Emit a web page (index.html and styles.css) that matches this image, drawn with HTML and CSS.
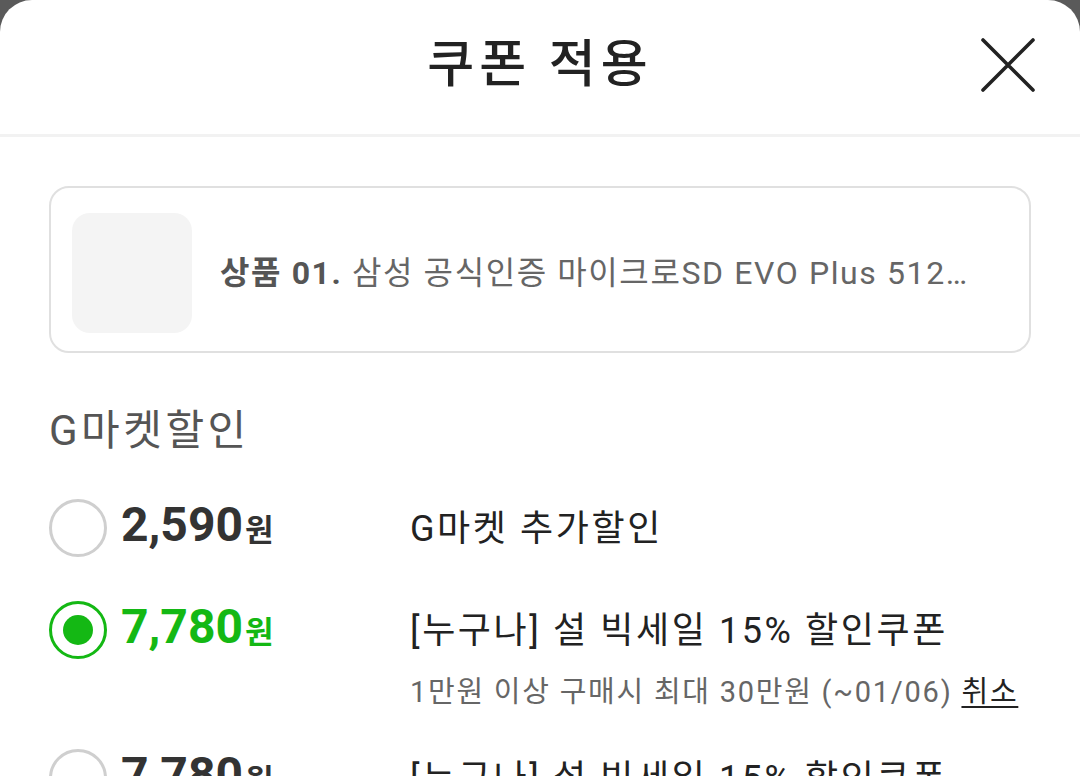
FILE: index.html
```html
<!DOCTYPE html>
<html lang="ko">
<head>
    <meta charset="UTF-8">
    <meta name="viewport" content="width=device-width, initial-scale=1.0">
    <title>쿠폰 적용</title>
    <link rel="stylesheet" href="styles.css">
</head>
<body>

    <div class="sheet">
        <header class="sheet-header">
            <h1>쿠폰 적용</h1>
            <button class="close-btn" type="button" aria-label="닫기">
                <svg width="54" height="54" viewBox="0 0 54 54">
                    <path d="M2 2 L52 52 M52 2 L2 52" stroke="#222" stroke-width="3.6" stroke-linecap="round" fill="none"/>
                </svg>
            </button>
        </header>

        <main class="sheet-body">
            <!-- product summary -->
            <div class="product-card">
                <div class="product-thumb"></div>
                <p class="product-name"><strong>상품 01.</strong> 삼성 공식인증 마이크로SD EVO Plus 512…</p>
            </div>

            <section class="coupon-group">
                <h2>G마켓할인</h2>

                <div class="coupon-row">
                    <div class="coupon-left">
                        <span class="radio"></span>
                        <span class="price">2,590<small>원</small></span>
                    </div>
                    <div class="coupon-info">
                        <p class="coupon-title">G마켓 추가할인</p>
                    </div>
                </div>

                <div class="coupon-row is-selected">
                    <div class="coupon-left">
                        <span class="radio"></span>
                        <span class="price">7,780<small>원</small></span>
                    </div>
                    <div class="coupon-info">
                        <p class="coupon-title">[누구나] 설 빅세일 15% 할인쿠폰</p>
                        <p class="coupon-desc">1만원 이상 구매시 최대 30만원 (~01/06) <a href="#">취소</a></p>
                    </div>
                </div>

                <div class="coupon-row">
                    <div class="coupon-left">
                        <span class="radio"></span>
                        <span class="price">7,780<small>원</small></span>
                    </div>
                    <div class="coupon-info">
                        <p class="coupon-title">[누구나] 설 빅세일 15% 할인쿠폰</p>
                        <p class="coupon-desc">1만원 이상 구매시 최대 30만원 (~01/06)</p>
                    </div>
                </div>
            </section>
        </main>
    </div>

</body>
</html>
```

FILE: styles.css
```css
/* --- base --- */
:root {
    --text-dark: #222;
    --text-mid: #555;
    --text-light: #666;
    --line: #e0e0e0;
    --green: #14b814;
}
* { margin: 0; padding: 0; box-sizing: border-box; }
html, body { height: 100%; }
body { font-family: Roboto, "Noto Sans CJK KR", sans-serif; background: #5a5a5a; color: var(--text-dark); overflow: hidden; }

/* --- bottom sheet --- */
.sheet { background: #fff; border-radius: 32px 32px 0 0; min-height: 100%; }
.sheet-header { position: relative; height: 137px; border-bottom: 3px solid #f2f2f2; display: flex; align-items: center; justify-content: center; padding-bottom: 14px; }
.sheet-header h1 { font-size: 51px; font-weight: 500; color: var(--text-dark); letter-spacing: 5px; }
.close-btn { position: absolute; right: 45px; top: 38px; width: 54px; height: 54px; border: none; background: none; }
.close-btn svg { display: block; }

.sheet-body { padding: 49px 49px 0; }

/* --- product card --- */
.product-card { display: flex; align-items: center; gap: 28px; height: 167px; padding: 0 21px; border: 2px solid var(--line); border-radius: 20px; }
.product-thumb { width: 120px; height: 120px; border-radius: 18px; background: #f4f4f4; flex-shrink: 0; margin-top: 6px; }
.product-name { font-size: 32px; letter-spacing: 1.6px; color: var(--text-light); white-space: nowrap; overflow: hidden; }
.product-name strong { color: var(--text-mid); font-weight: 700; }

/* --- coupons --- */
.coupon-group { margin-top: 53px; }
.coupon-group h2 { font-size: 42px; font-weight: 400; color: var(--text-mid); letter-spacing: 3.5px; line-height: 50px; margin-bottom: 43px; }
.coupon-row { display: grid; grid-template-columns: 361px 1fr; margin-bottom: 43px; }
.coupon-left { display: flex; align-items: center; gap: 14px; height: 58px; }
.radio { width: 58px; height: 58px; border-radius: 50%; border: 3px solid #cfcfcf; flex-shrink: 0; position: relative; }
.price { font-size: 48px; font-weight: 700; color: #333; letter-spacing: 0; line-height: 58px; }
.price small { font-size: 31px; font-weight: 700; margin-left: 2px; }

.coupon-info { padding-top: 1px; }
.coupon-title { font-size: 36px; letter-spacing: 2.6px; line-height: 58px; color: var(--text-dark); white-space: nowrap; }
.coupon-desc { font-size: 29px; letter-spacing: 1.75px; line-height: 28px; color: var(--text-light); margin-top: 18px; white-space: nowrap; }
.coupon-desc a { color: var(--text-dark); text-decoration: underline; text-underline-offset: 4px; }

.coupon-row.is-selected .radio { border-color: var(--green); }
.coupon-row.is-selected .radio::after { content: ""; position: absolute; left: 50%; top: 50%; width: 30px; height: 30px; margin: -15px 0 0 -15px; border-radius: 50%; background: var(--green); }
.coupon-row.is-selected .price { color: var(--green); }
```
